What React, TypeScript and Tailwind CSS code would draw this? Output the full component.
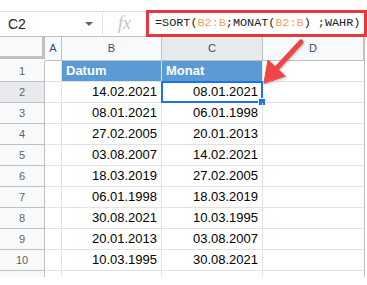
import React from "react";

const colB = ["14.02.2021", "08.01.2021", "27.02.2005", "03.08.2007", "18.03.2019", "06.01.1998", "30.08.2021", "20.01.2013", "10.03.1995"];
const colC = ["08.01.2021", "06.01.1998", "20.01.2013", "14.02.2021", "27.02.2005", "18.03.2019", "10.03.1995", "03.08.2007", "30.08.2021"];

function RowHead({ n, active }: { n: number | string; active?: boolean }) {
  return (
    <div
      className={`w-[45px] shrink-0 flex items-center justify-center border-r border-b border-[#c0c0c0] text-[11px] text-[#5f6368] ${
        active ? "bg-[#e8eaed]" : "bg-[#f8f9fa]"
      }`}
    >
      {n}
    </div>
  );
}

export default function App() {
  return (
    <div className="relative w-[367px] h-[285px] bg-white overflow-hidden" style={{ fontFamily: "Arial, 'Liberation Sans', sans-serif" }}>
      {/* toolbar / formula bar */}
      <div className="h-[11px]" />
      <div className="flex h-[25px] border-t border-[#e0e0e0]">
        <div className="w-[103px] shrink-0 flex items-center pl-[8px] pr-[8px] border-r border-[#e0e0e0] my-[1px]">
          <span className="text-[14px] text-[#202124]">C2</span>
          <span className="ml-auto mr-[1px] w-0 h-0 border-l-[4px] border-r-[4px] border-t-[4px] border-l-transparent border-r-transparent border-t-[#5f6368]" />
        </div>
        <div className="w-[43px] shrink-0 flex items-center justify-center">
          <span className="text-[18px] italic text-[#c4c4c4] -mt-[2px]" style={{ fontFamily: "'Liberation Serif', serif" }}>fx</span>
        </div>
        <div className="flex-1 -mt-[2px] h-[27px] border-[3px] border-[#e8383d] flex items-center pl-[6px] text-[11.8px] text-[#202124] whitespace-pre" style={{ fontFamily: "'Liberation Mono', monospace" }}>
          =SORT(<span className="text-[#f0a25e]">B2:B</span>;MONAT(<span className="text-[#f0a25e]">B2:B</span>) ;WAHR)
        </div>
      </div>

      {/* grid */}
      <div className="w-[365px] border-r border-[#c0c0c0]">
        {/* column headers */}
        <div className="flex h-[25px] border-t border-[#c0c0c0]">
          <div className="w-[45px] shrink-0 bg-[#f8f9fa] border-r-[3px] border-b-[3px] border-[#c0c0c0] mb-[2px]" />
          {[
            { l: "A", w: "w-[17px]", a: false },
            { l: "B", w: "w-[100px]", a: false },
            { l: "C", w: "w-[101px]", a: true },
            { l: "D", w: "w-[101px]", a: false },
          ].map((c) => (
            <div
              key={c.l}
              className={`${c.w} shrink-0 flex items-center justify-center border-r border-b border-[#c0c0c0] text-[11px] text-[#3c4a6e] ${
                c.a ? "bg-[#e8eaed]" : "bg-[#f8f9fa]"
              }`}
            >
              {c.l}
            </div>
          ))}
        </div>

        {/* row 1 */}
        <div className="flex h-[21px]">
          <RowHead n={1} />
          <div className="w-[17px] shrink-0 border-r border-b border-[#e2e2e2]" />
          <div className="w-[100px] shrink-0 bg-[#5b9bd5] border-r border-b border-[#e2e2e2] flex items-center pl-[4px] text-[13px] font-bold text-white">Datum</div>
          <div className="w-[101px] shrink-0 bg-[#5b9bd5] border-r border-b border-[#e2e2e2] flex items-center pl-[4px] text-[13px] font-bold text-white">Monat</div>
          <div className="w-[101px] shrink-0 border-b border-[#e2e2e2]" />
        </div>

        {colB.map((b, i) => (
          <div key={i} className="flex h-[21px]">
            <RowHead n={i + 2} active={i === 0} />
            <div className="w-[17px] shrink-0 border-r border-b border-[#e2e2e2]" />
            <div className="w-[100px] shrink-0 border-r border-b border-[#e2e2e2] flex items-center justify-end pr-[4px] text-[13px] text-black">{b}</div>
            <div className="relative w-[101px] shrink-0 border-r border-b border-[#e2e2e2] flex items-center justify-end pr-[4px] text-[13px] text-black">
              {colC[i]}
              {i === 0 && (
                <>
                  <div className="absolute -left-[1px] -top-[1px] -right-[1px] -bottom-[1px] border-2 border-[#1a73e8]" />
                  <div className="absolute -right-[4px] -bottom-[4px] w-[6px] h-[6px] bg-[#1a73e8] border border-white box-content" />
                </>
              )}
            </div>
            <div className="w-[101px] shrink-0 border-b border-[#e2e2e2]" />
          </div>
        ))}

        {/* partial row 11 */}
        <div className="flex h-[6px]">
          <div className="w-[45px] shrink-0 bg-[#f8f9fa] border-r border-[#c0c0c0]" />
          <div className="w-[17px] shrink-0 border-r border-[#e2e2e2]" />
          <div className="w-[100px] shrink-0 border-r border-[#e2e2e2]" />
          <div className="w-[101px] shrink-0 border-r border-[#e2e2e2]" />
          <div className="w-[101px] shrink-0" />
        </div>
      </div>

      {/* annotation arrow */}
      <svg className="absolute left-0 top-0 pointer-events-none" width="367" height="285" viewBox="0 0 367 285">
        <defs>
          <filter id="sh" x="-20%" y="-20%" width="140%" height="140%">
            <feDropShadow dx="1" dy="1" stdDeviation="1" floodColor="#000" floodOpacity="0.25" />
          </filter>
        </defs>
        <g filter="url(#sh)" fill="#ef4444" stroke="#ef4444" strokeLinecap="round" strokeLinejoin="round">
          <line x1="301" y1="42" x2="276" y2="69" strokeWidth="5" />
          <polygon points="264,83 268,60 285,76" strokeWidth="1" />
        </g>
      </svg>
    </div>
  );
}
